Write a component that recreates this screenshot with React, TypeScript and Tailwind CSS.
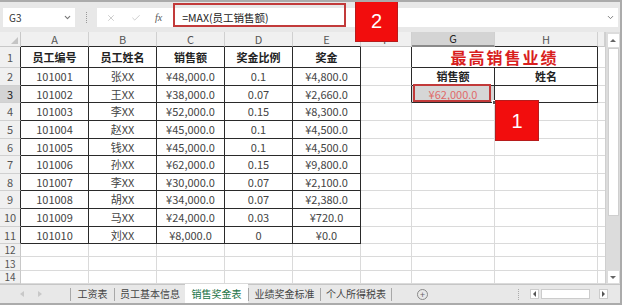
import { ChevronDown, Check, X } from "lucide-react";

const colW = ["w-[68px]", "w-[68px]", "w-[68px]", "w-[68px]", "w-[68px]", "w-[51px]", "w-[83px]", "w-[103px]", "w-[7px]"];
const colNames = ["A", "B", "C", "D", "E", "F", "G", "H", ""];
const rowH = [
  "h-[21px]", "h-[18px]", "h-[17px]", "h-[18px]", "h-[18px]", "h-[17px]", "h-[18px]",
  "h-[17px]", "h-[18px]", "h-[18px]", "h-[17px]", "h-[13px]", "h-[14px]", "h-[13px]",
];

const data = [
  ["101001", "张XX", "¥48,000.0", "0.1", "¥4,800.0"],
  ["101002", "王XX", "¥38,000.0", "0.07", "¥2,660.0"],
  ["101003", "李XX", "¥52,000.0", "0.15", "¥8,300.0"],
  ["101004", "赵XX", "¥45,000.0", "0.1", "¥4,500.0"],
  ["101005", "钱XX", "¥45,000.0", "0.1", "¥4,500.0"],
  ["101006", "孙XX", "¥62,000.0", "0.15", "¥9,800.0"],
  ["101007", "李XX", "¥30,000.0", "0.07", "¥2,100.0"],
  ["101008", "胡XX", "¥34,000.0", "0.07", "¥2,380.0"],
  ["101009", "马XX", "¥24,000.0", "0.03", "¥720.0"],
  ["101010", "刘XX", "¥8,000.0", "0", "¥0.0"],
];
const heads = ["员工编号", "员工姓名", "销售额", "奖金比例", "奖金"];
const tabs = [
  { name: "工资表", w: "w-[43px]" },
  { name: "员工基本信息", w: "w-[70px]" },
  { name: "销售奖金表", w: "w-[63px]", active: true },
  { name: "业绩奖金标准", w: "w-[71px]" },
  { name: "个人所得税表", w: "w-[70px]" },
];

function cellBorder(r: number, c: number) {
  if (r <= 11 && c <= 4) return "border-r border-b border-[#2a2a2a]";
  if (r <= 3 && (c === 6 || c === 7)) return "border-r border-b border-[#2a2a2a]";
  if (r <= 3 && c === 5) return "border-r border-b border-[#dadada] border-r-[#2a2a2a]";
  return "border-r border-b border-[#dadada]";
}

function CellBody({ r, c }: { r: number; c: number }) {
  if (r === 1 && c <= 4) return <span className="font-bold text-[#222]">{heads[c]}</span>;
  if (r >= 2 && r <= 11 && c <= 4) return <span>{data[r - 2][c]}</span>;
  if (r === 2 && c === 6) return <span className="font-bold text-[#222]">销售额</span>;
  if (r === 2 && c === 7) return <span className="font-bold text-[#222]">姓名</span>;
  return null;
}

function Sep() {
  return <div className="h-[13px] border-l border-[#a8a8a8] self-center" />;
}

export default function App() {
  return (
    <div className="relative w-[622px] h-[305px] overflow-hidden bg-[#e8e8e8] border-t-2 border-r-2 border-b-2 border-[#ababab] font-['Noto_Sans_CJK_SC',sans-serif] text-[11px] text-[#444]">
      {/* formula bar */}
      <div className="h-[30px] flex items-start pt-[6px]">
        <div className="ml-[3px] w-[72px] h-[19px] bg-white flex items-center justify-between pl-[6px] pr-[3px] text-[10px] text-[#333]">
          <span>G3</span>
          <ChevronDown className="size-[9px] text-[#777]" strokeWidth={3} />
        </div>
        <div className="w-[22px] h-[19px] flex items-center justify-center">
          <div className="h-[11px] border-l border-dotted border-[#999]" />
        </div>
        <div className="flex-1 h-[19px] bg-white flex items-center mr-[2px]">
          <X className="ml-[9px] size-[10px] text-[#c4c4c4]" />
          <Check className="ml-[15px] size-[10px] text-[#c4c4c4]" />
          <span className="ml-[14px] italic text-[10px] text-[#555] font-['Liberation_Serif',serif]">fx</span>
          <span className="ml-[20px] text-[10.5px] text-[#222]">=MAX(员工销售额)</span>
          <div className="flex-1" />
          <ChevronDown className="size-[9px] text-[#777] mr-[3px]" strokeWidth={2.5} />
        </div>
      </div>

      <div className="flex">
        <div className="w-[605px] bg-white">
          {/* column header */}
          <div className="flex h-[15px] bg-[#f0f0f0]">
            <div className="w-[21px] border-r border-b border-[#c8c8c8] relative">
              <div className="absolute right-[2px] bottom-[2px] w-0 h-0 border-l-[7px] border-l-transparent border-b-[7px] border-b-[#c4c4c4]" />
            </div>
            {colNames.map((n, c) => (
              <div
                key={c}
                className={`${colW[c]} border-r border-b border-r-[#d0d0d0] flex items-center justify-center text-[11px] leading-none ${
                  c === 6 ? "bg-[#d4d4d4] text-[#222] border-b-2 border-b-[#8a8a8a]" : "text-[#555]"
                } ${c <= 4 || c === 7 ? "border-b-[#2a2a2a]" : c === 6 ? "" : "border-b-[#c8c8c8]"}`}
              >
                {n}
              </div>
            ))}
          </div>

          {rowH.map((h, i) => {
            const r = i + 1;
            return (
              <div key={r} className={`flex ${h}`}>
                <div
                  className={`w-[21px] border-r border-b border-b-[#d0d0d0] flex items-center justify-center leading-none ${
                    r >= 12 ? "text-[10px]" : "text-[11px]"
                  } ${r <= 11 ? "border-r-[#2a2a2a]" : "border-r-[#c8c8c8]"} ${
                    r === 3 ? "bg-[#d4d4d4] text-[#222]" : "bg-[#f0f0f0] text-[#555]"
                  }`}
                >
                  {r}
                </div>
                {r === 1 ? (
                  <>
                    {[0, 1, 2, 3, 4, 5].map((c) => (
                      <div key={c} className={`${colW[c]} ${cellBorder(r, c)} flex items-center justify-center`}>
                        <CellBody r={r} c={c} />
                      </div>
                    ))}
                    <div className="w-[186px] border-r border-b border-[#2a2a2a] flex items-center justify-center">
                      <span className="text-[16px] font-bold tracking-[2px] text-[#d91e1e] leading-none">最高销售业绩</span>
                    </div>
                    <div className={`${colW[8]} border-b border-[#dadada]`} />
                  </>
                ) : (
                  colW.map((w, c) =>
                    r === 3 && c === 6 ? (
                      <div key={c} className={`${w} ${cellBorder(r, c)} relative bg-[#d6d6d6] flex items-center justify-center`}>
                        <div className="absolute left-[1px] top-[-2px] right-[3px] bottom-[0px] border-2 border-[#c23a3a]" />
                        <span className="text-[#e06a6a]">¥62,000.0</span>
                        <div className="absolute right-[-3px] bottom-[-3px] w-[5px] h-[5px] bg-[#555] border border-white" />
                      </div>
                    ) : (
                      <div key={c} className={`${w} ${c === 8 ? "border-b border-[#dadada]" : cellBorder(r, c)} flex items-center justify-center`}>
                        <CellBody r={r} c={c} />
                      </div>
                    )
                  )
                )}
              </div>
            );
          })}
        </div>

        {/* vertical scrollbar */}
        <div className="w-[15px] h-[252px] bg-[#dcdcdc] border-l border-[#cfcfcf] flex flex-col items-center">
          <div className="w-[11px] h-[13px] mt-[2px] bg-white flex items-center justify-center">
            <div className="w-0 h-0 border-l-[3px] border-r-[3px] border-b-[3px] border-l-transparent border-r-transparent border-b-[#666]" />
          </div>
          <div className="w-[11px] h-[168px] bg-white border border-[#cfcfcf] mt-[1px]" />
          <div className="flex-1" />
          <div className="w-[11px] h-[12px] mb-[1px] bg-white flex items-center justify-center">
            <div className="w-0 h-0 border-l-[3px] border-r-[3px] border-t-[3px] border-l-transparent border-r-transparent border-t-[#666]" />
          </div>
        </div>
      </div>

      {/* sheet tabs */}
      <div className="h-[19px] flex items-stretch bg-[#e8e8e8] border-t border-[#c6c6c6]">
        <div className="w-[70px] flex items-center">
          <div className="ml-[20px] w-0 h-0 border-t-[3px] border-b-[3px] border-r-[4px] border-t-transparent border-b-transparent border-r-[#c8c8c8]" />
          <div className="ml-[14px] w-0 h-0 border-t-[3px] border-b-[3px] border-l-[4px] border-t-transparent border-b-transparent border-l-[#c8c8c8]" />
        </div>
        {tabs.map((t) => (
          <div key={t.name} className="flex items-stretch">
            {!t.active && <Sep />}
            <div className={`${t.w} flex items-center justify-center ${t.active ? "bg-white text-[#217346] -mt-px" : "text-[#444]"}`}>
              <span className="text-[10px] leading-none">{t.name}</span>
            </div>
          </div>
        ))}
        <Sep />
        <div className="w-[36px] flex items-center justify-end">
          <div className="size-[11px] rounded-full border border-[#888] flex items-center justify-center text-[9px] leading-none text-[#666]">+</div>
        </div>
        <div className="w-[90px]" />
        <div className="flex items-center">
          <div className="h-[11px] border-l border-dotted border-[#aaa] mr-[11px]" />
          <div className="w-[9px] h-[10px] bg-white border border-[#ccc] flex items-center justify-center">
            <div className="w-0 h-0 border-t-[3px] border-b-[3px] border-r-[3px] border-t-transparent border-b-transparent border-r-[#555]" />
          </div>
          <div className="w-[49px] h-[10px] bg-white ml-[2px] border border-[#ccc]" />
          <div className="w-[9px] h-[10px]" />
          <div className="w-[9px] h-[10px] bg-white border border-[#ccc] flex items-center justify-center">
            <div className="w-0 h-0 border-t-[3px] border-b-[3px] border-l-[3px] border-t-transparent border-b-transparent border-l-[#555]" />
          </div>
        </div>
      </div>

      {/* annotations */}
      <div className="absolute left-[173px] top-[1px] w-[173px] h-[24px] border-2 border-[#c23a3a]" />
      <div className="absolute left-[355px] top-[-2px] w-[43px] h-[42px] bg-[#f20d0d] border border-[#b71c1c] flex items-center justify-center text-white text-[20px] font-['Liberation_Sans',sans-serif]">
        2
      </div>
      <div className="absolute left-[495px] top-[98px] w-[44px] h-[41px] bg-[#f20d0d] border border-[#b71c1c] flex items-center justify-center text-white text-[20px] font-['Liberation_Sans',sans-serif]">
        1
      </div>
    </div>
  );
}
